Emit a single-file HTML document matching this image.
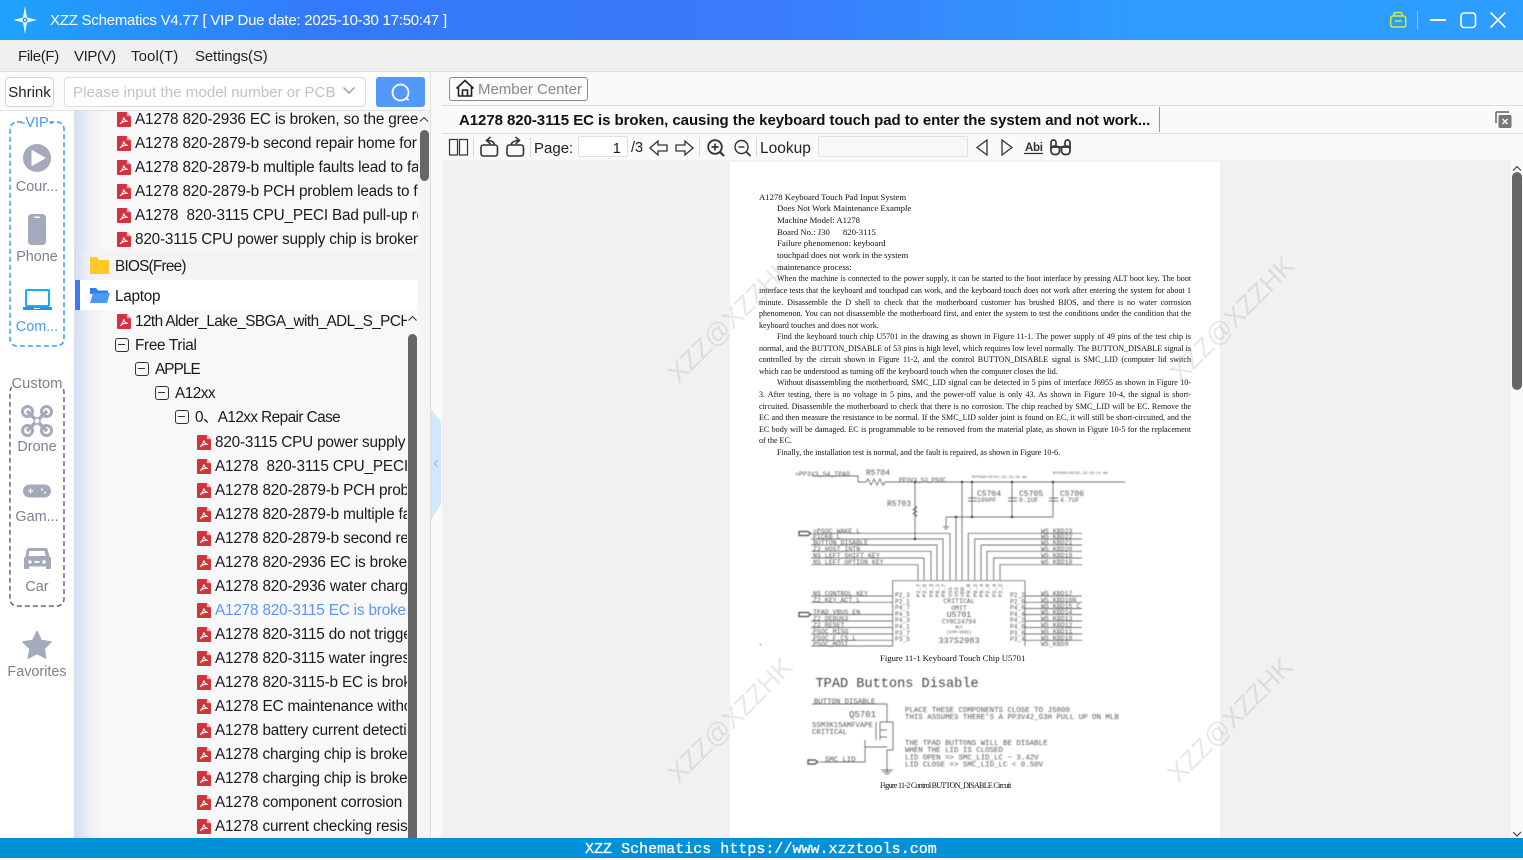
<!DOCTYPE html>
<html><head><meta charset="utf-8"><title>XZZ Schematics</title>
<style>
*{box-sizing:border-box}
html,body{margin:0;padding:0;width:1523px;height:858px;overflow:hidden;background:#fafafa;font-family:"Liberation Sans","Noto Sans CJK SC",sans-serif;color:#111}
.a{position:absolute}
.tb{left:0;top:0;width:1523px;height:40px;background:linear-gradient(90deg,#1ea3fb 0,#3478fb 22%,#3a7bfb 50%,#2e9cff 75%,#2d9dff 100%);color:#fff;font-size:15px;letter-spacing:-.24px;line-height:41px}
.menu{left:0;top:40px;width:1523px;height:32px;background:#f0f0f0;border-bottom:1px solid #dcdcdc;font-size:15px;line-height:34px;color:#222}
.menu span{position:absolute;top:0}
.side{left:0;top:111px;width:74px;height:727px;background:#fff}
.sl{position:absolute;left:0;width:74px;text-align:center;font-size:14.4px;line-height:20px;color:#7b8190}
.list{background:linear-gradient(90deg,#d3def2 0,#eef1f6 18px,#f8f8f8 30px,#f8f8f8 100%)}
.clip{position:absolute;left:74px;overflow:hidden}
.r{position:absolute;height:24px;line-height:26px;white-space:nowrap;font-size:15.3px;letter-spacing:-.17px;color:#1a1a1a}
.r svg{position:absolute;left:-18px;top:5px;width:14px;height:15px}
.m{position:absolute;left:-20px;top:5px;width:14px;height:14px;border:1.3px solid #333;border-radius:3px}
.m:after{content:"";position:absolute;left:2px;top:4.7px;width:7.4px;height:1.3px;background:#333}
.pl{position:absolute;font-family:"Liberation Serif",serif;font-size:8.05px;line-height:11.5px;height:11.5px;color:#111;overflow:hidden;white-space:nowrap}
.h{font-size:8.7px}
.j{left:759px;width:432px;white-space:normal;text-align:justify;text-align-last:justify}
.ji{left:777px;width:414px;white-space:normal;text-align:justify;text-align-last:justify}
.wm{position:absolute;font-size:26.5px;color:rgba(140,140,140,.2);transform:rotate(-45deg);white-space:nowrap;line-height:40px;width:200px;text-align:center}
svg text{font-family:"Liberation Mono",monospace}
.tlabel{font-size:15.3px;letter-spacing:-.25px;color:#1a1a1a;line-height:26px;white-space:nowrap}
</style></head><body>
<svg width="0" height="0" style="position:absolute"><defs>
<symbol id="pdf" viewBox="0 0 15 16"><path d="M1 0H10.5L15 4.5V15a1 1 0 0 1-1 1H1a1 1 0 0 1-1-1V1a1 1 0 0 1 1-1z" fill="#d2333f"/><path d="M10.5 0L15 4.5H10.5z" fill="#f0a5aa"/><path d="M3.2 12.6C5 11.5 6.8 8.5 7.4 5.6 7.6 8 9 9.6 11.6 10 9 9.6 6 10.2 3.2 12.6z" fill="none" stroke="#fff" stroke-width="1.1"/></symbol>
</defs></svg>

<!-- Title bar -->
<div class="a tb"><span class="a" style="left:50px;top:0;white-space:nowrap">XZZ Schematics V4.77 [ VIP Due date: 2025-10-30 17:50:47 ]</span></div>
<svg class="a" style="left:0;top:0" width="1523" height="40">
<path d="M25 6L27 17.5 37 20 27 22.5 25 34 23 22.5 13 20 23 17.5z" fill="#fff" opacity=".92"/>
<circle cx="25" cy="20" r="2.4" fill="#2a8df8"/><circle cx="25" cy="20" r="1" fill="#fff"/>
<g fill="none" stroke="#d7ea3a" stroke-width="1.5"><rect x="1390.7" y="16" width="15" height="11" rx="2"/><path d="M1394 16v-2.4a1 1 0 0 1 1-1h6a1 1 0 0 1 1 1V16"/><path d="M1395 21h6.5"/></g>
<path d="M1417.5 11V29" stroke="#8cc4fa" stroke-width="1"/>
<path d="M1430 20H1446" stroke="#fff" stroke-width="2"/>
<rect x="1461" y="13" width="14.5" height="14.5" rx="3" fill="none" stroke="#fff" stroke-width="1.6"/>
<path d="M1490.5 12.5L1505.5 27.5M1505.5 12.5L1490.5 27.5" stroke="#fff" stroke-width="1.6"/>
</svg>

<!-- Menu -->
<div class="a menu"><span style="left:18px;letter-spacing:-.35px">File(F)</span><span style="left:74px;letter-spacing:-.4px">VIP(V)</span><span style="left:131px;letter-spacing:.1px">Tool(T)</span><span style="left:195px;letter-spacing:-.15px">Settings(S)</span></div>

<!-- Search row -->
<div class="a" style="left:0;top:72px;width:431px;height:39px;background:#fbfbfb;border-bottom:1px solid #e2e2e2"></div>
<div class="a" style="left:5px;top:77px;width:49px;height:30px;background:#fff;border:1px solid #d4d4d4;border-radius:4px;font-size:15px;line-height:30px;text-align:center;color:#222">Shrink</div>
<div class="a" style="left:64px;top:77px;width:302px;height:30px;background:#fff;border:1px solid #dcdcdc;border-radius:4px;font-size:15.150px;line-height:30px;color:#c2c2c2;padding-left:8px;white-space:nowrap">Please input the model number or PCB</div>
<svg class="a" style="left:340px;top:84px" width="18" height="14"><path d="M3.5 3.5L9 9 14.500 3.5" fill="none" stroke="#999" stroke-width="1.4"/></svg>
<div class="a" style="left:376px;top:77px;width:49px;height:30px;background:#5299fb;border-radius:3px"></div>
<svg class="a" style="left:376px;top:77px" width="49" height="30"><circle cx="24.500" cy="15.500" r="8" fill="none" stroke="#fff" stroke-width="1.8"/><path d="M30 21l2.500 2" stroke="#fff" stroke-width="1.8"/></svg>

<!-- Side rail -->
<div class="a side"></div>
<svg class="a" style="left:0;top:111px" width="74" height="590">
<rect x="10" y="11" width="54" height="224" rx="7" fill="none" stroke="#3a9cf6" stroke-width="1.5" stroke-dasharray="5 3"/>
<rect x="10" y="274" width="54" height="221" rx="7" fill="none" stroke="#646c7c" stroke-width="1.5" stroke-dasharray="5 3"/>
<rect x="24" y="3" width="26" height="16" fill="#fff"/>
<rect x="12" y="264" width="50" height="16" fill="#fff"/>
<!-- play -->
<circle cx="37" cy="47" r="14" fill="#a3aabb"/><path d="M32 39.500L45 47 32 54.500z" fill="#fff" stroke="#fff" stroke-linejoin="round"/>
<!-- phone -->
<rect x="28" y="103" width="18" height="31" rx="3.500" fill="#a3aabb"/><rect x="34" y="105.500" width="6" height="1.500" rx=".7" fill="#fff"/>
<!-- computer -->
<rect x="26" y="179" width="23" height="16" rx="1" fill="#fff" stroke="#12b0f6" stroke-width="2"/><path d="M23 197.500H52" stroke="#2b8ff5" stroke-width="3"/><path d="M34 197.500h6" stroke="#fff" stroke-width="1"/>
<!-- drone -->
<g fill="none" stroke="#a3aabb"><path d="M27 300L47 320M47 300L27 320" stroke-width="3.500"/><circle cx="27.500" cy="300.500" r="5" stroke-width="3"/><circle cx="46.500" cy="300.500" r="5" stroke-width="3"/><circle cx="27.500" cy="319.500" r="5" stroke-width="3"/><circle cx="46.500" cy="319.500" r="5" stroke-width="3"/></g><circle cx="37" cy="310" r="3" fill="#fff" stroke="#a3aabb" stroke-width="1.500"/>
<!-- gamepad -->
<rect x="23" y="373.500" width="28" height="13" rx="6.500" fill="#a3aabb"/><path d="M28 380h5M30.500 377.500v5" stroke="#fff" stroke-width="1.200"/><circle cx="42" cy="378.500" r="1" fill="#fff"/><circle cx="45" cy="381.500" r="1" fill="#fff"/>
<!-- car -->
<path d="M29 437h16a3 3 0 0 1 3 2.500l1.500 6 1.500 1.500v11h-5v-2.500H29V458h-5V447l1.500-1.500 1-6A3 3 0 0 1 29 437z" fill="#a3aabb"/><path d="M29.500 440h15l1.200 5H28.300z" fill="#fff"/><circle cx="30" cy="451" r="1.700" fill="#fff"/><circle cx="44" cy="451" r="1.700" fill="#fff"/><rect x="34.500" y="450" width="5" height="1.800" fill="#fff"/>
<!-- star -->
<path d="M37 520.500l4.300 9 9.700 1.400-7 6.800 1.700 9.300-8.700-4.500-8.700 4.500 1.700-9.300-7-6.800 9.700-1.400z" fill="#a3aabb" stroke="#a3aabb" stroke-width="1.500" stroke-linejoin="round"/>
</svg>
<div class="sl" style="top:113px;color:#3a9cf6">-VIP-</div>
<div class="sl" style="top:177px">Cour...</div>
<div class="sl" style="top:247px">Phone</div>
<div class="sl" style="top:317px;color:#4a9bf6">Com...</div>
<div class="sl" style="top:374px;font-size:14.800px">Custom</div>
<div class="sl" style="top:437px">Drone</div>
<div class="sl" style="top:507px">Gam...</div>
<div class="sl" style="top:577px">Car</div>
<div class="sl" style="top:662px">Favorites</div>

<!-- Tree part A -->
<div class="clip list" style="top:111px;width:344px;height:139px">
<div class="r" style="left:61px;top:-4px"><svg><use href="#pdf"/></svg>A1278 820-2936 EC is broken, so the green light does not work</div>
<div class="r" style="left:61px;top:20px"><svg><use href="#pdf"/></svg>A1278 820-2879-b second repair home for repair</div>
<div class="r" style="left:61px;top:44px"><svg><use href="#pdf"/></svg>A1278 820-2879-b multiple faults lead to failure</div>
<div class="r" style="left:61px;top:68px"><svg><use href="#pdf"/></svg>A1278 820-2879-b PCH problem leads to failure</div>
<div class="r" style="left:61px;top:92px"><svg><use href="#pdf"/></svg>A1278&nbsp; 820-3115 CPU_PECI Bad pull-up resistor</div>
<div class="r" style="left:61px;top:116px"><svg><use href="#pdf"/></svg>820-3115 CPU power supply chip is broken</div>
</div>
<div class="a list" style="left:74px;top:250px;width:344px;height:30px;background:linear-gradient(90deg,#d3def2 0,#eef1f6 14px,#f4f4f4 24px)"></div>
<svg class="a" style="left:88px;top:255px" width="24" height="20"><path d="M2 3a1 1 0 0 1 1-1h6l2 3h10v14H2z" fill="#ffc928"/></svg>
<div class="a tlabel" style="left:115px;top:254px;letter-spacing:-.75px">BIOS(Free)</div>
<div class="a" style="left:74px;top:280px;width:344px;height:30px;background:#fff"></div>
<div class="a" style="left:75px;top:280px;width:5px;height:30px;background:#3f78f5"></div>
<svg class="a" style="left:88px;top:286px" width="24" height="20"><path d="M2 2h6l2 2.500h10V8H2z" fill="#2f7ff0"/><path d="M5 7h17l-3 10H2z" fill="#4b98f7"/></svg>
<div class="a tlabel" style="left:115px;top:284px">Laptop</div>

<!-- Tree part B -->
<div class="clip list" style="top:310px;width:333px;height:528px">
<div class="r" style="left:61px;top:-1px;letter-spacing:-.55px"><svg><use href="#pdf"/></svg>12th Alder_Lake_SBGA_with_ADL_S_PCH_</div>
<div class="r" style="left:61px;top:23px;letter-spacing:-.3px"><i class="m"></i>Free Trial</div>
<div class="r" style="left:81px;top:47px;letter-spacing:-.9px"><i class="m"></i>APPLE</div>
<div class="r" style="left:101px;top:71px;letter-spacing:-.5px"><i class="m"></i>A12xx</div>
<div class="r" style="left:121px;top:95px;letter-spacing:-.55px"><i class="m"></i>0、A12xx Repair Case</div>
<div class="r" style="left:141px;top:120px"><svg><use href="#pdf"/></svg>820-3115 CPU power supply chip</div>
<div class="r" style="left:141px;top:144px"><svg><use href="#pdf"/></svg>A1278&nbsp; 820-3115 CPU_PECI Bad pull-up</div>
<div class="r" style="left:141px;top:168px"><svg><use href="#pdf"/></svg>A1278 820-2879-b PCH problem leads</div>
<div class="r" style="left:141px;top:192px"><svg><use href="#pdf"/></svg>A1278 820-2879-b multiple faults lead</div>
<div class="r" style="left:141px;top:216px"><svg><use href="#pdf"/></svg>A1278 820-2879-b second repair</div>
<div class="r" style="left:141px;top:240px"><svg><use href="#pdf"/></svg>A1278 820-2936 EC is broken, so</div>
<div class="r" style="left:141px;top:264px"><svg><use href="#pdf"/></svg>A1278 820-2936 water charging</div>
<div class="r" style="left:141px;top:288px;color:#5b96f7"><svg><use href="#pdf"/></svg>A1278 820-3115 EC is broken, causing</div>
<div class="r" style="left:141px;top:312px"><svg><use href="#pdf"/></svg>A1278 820-3115 do not trigger</div>
<div class="r" style="left:141px;top:336px"><svg><use href="#pdf"/></svg>A1278 820-3115 water ingress</div>
<div class="r" style="left:141px;top:360px"><svg><use href="#pdf"/></svg>A1278 820-3115-b EC is broken</div>
<div class="r" style="left:141px;top:384px"><svg><use href="#pdf"/></svg>A1278 EC maintenance without</div>
<div class="r" style="left:141px;top:408px"><svg><use href="#pdf"/></svg>A1278 battery current detection</div>
<div class="r" style="left:141px;top:432px"><svg><use href="#pdf"/></svg>A1278 charging chip is broken</div>
<div class="r" style="left:141px;top:456px"><svg><use href="#pdf"/></svg>A1278 charging chip is broken</div>
<div class="r" style="left:141px;top:480px"><svg><use href="#pdf"/></svg>A1278 component corrosion</div>
<div class="r" style="left:141px;top:504px"><svg><use href="#pdf"/></svg>A1278 current checking resistor</div>
</div>
<div class="a" style="left:407px;top:310px;width:11px;height:528px;background:#f8f8f8"></div>
<div class="a" style="left:408px;top:334px;width:9px;height:504px;background:#666;border-radius:5px 5px 0 0"></div>
<svg class="a" style="left:406px;top:313px" width="13" height="11"><path d="M2.500 7.500L6.500 3.500 10.500 7.500" fill="none" stroke="#333" stroke-width="1"/></svg>

<!-- Scrollbar A -->
<div class="a" style="left:418px;top:111px;width:12px;height:727px;background:#f5f5f5"></div>
<div class="a" style="left:420px;top:130px;width:9px;height:51px;background:#666;border-radius:5px"></div>
<svg class="a" style="left:418px;top:114px" width="12" height="11"><path d="M2 7.500L6 3.500 10 7.500" fill="none" stroke="#333" stroke-width="1"/></svg>

<!-- Splitter -->
<div class="a" style="left:430px;top:72px;width:1px;height:766px;background:#dedede"></div>
<svg class="a" style="left:431px;top:405px" width="11" height="120"><path d="M0 4L10 17V99L0 115z" fill="#d2e7fb"/><path d="M6.500 55L3.500 58.500 6.500 62" fill="none" stroke="#86b8ee" stroke-width="1"/></svg>

<!-- Right header -->
<div class="a" style="left:442px;top:105px;width:1081px;height:1px;background:#dcdcdc"></div>
<div class="a" style="left:442px;top:133px;width:1081px;height:1px;background:#dcdcdc"></div>
<div class="a" style="left:449px;top:77px;width:139px;height:24px;border:1px solid #8a8a8a;border-radius:3px;background:#fbfbfb;font-size:15px;letter-spacing:-.02px;line-height:24px;color:#888;padding-left:28px;white-space:nowrap">Member Center</div>
<svg class="a" style="left:452.500px;top:78px" width="24" height="20"><path d="M3.500 10.500L12 2.500l8.500 8M5.500 8.500V18H18.500V8.500M9.500 18V12H14.500V18" fill="none" stroke="#222" stroke-width="1.600"/></svg>
<div class="a" style="left:459px;top:106px;width:695px;height:27px;font-size:15px;letter-spacing:-.06px;font-weight:bold;line-height:29px;color:#111;white-space:nowrap;overflow:hidden">A1278 820-3115 EC is broken, causing the keyboard touch pad to enter the system and not work...</div>
<div class="a" style="left:1159px;top:107px;width:1px;height:25px;background:#999"></div>
<svg class="a" style="left:1493px;top:109px" width="20" height="20"><path d="M3 14V4a1 1 0 0 1 1-1h12" fill="none" stroke="#777" stroke-width="1.700"/><rect x="5.500" y="6" width="13" height="13" rx="1.500" fill="#777"/><path d="M9.500 10l5 5M14.500 10l-5 5" stroke="#fff" stroke-width="1.400"/></svg>

<!-- Toolbar -->
<svg class="a" style="left:442px;top:134px" width="640" height="26">
<g fill="none" stroke="#333" stroke-width="1.200">
<rect x="7.500" y="5.500" width="8" height="15.500"/><rect x="17.500" y="5.500" width="8" height="15.500"/>
<rect x="39" y="11" width="16.500" height="11" rx="2.500" stroke-width="1.600"/><path d="M52.500 10.500C52 8 50 6.500 45 6.500M48.500 3L44.500 6.500 48.500 10" stroke-width="1.500"/>
<rect x="65" y="11" width="16.500" height="11" rx="2.500" stroke-width="1.600"/><path d="M69 10.500C70 8 72 6.500 77 6.500M73.500 3L77.500 6.500 73.500 10" stroke-width="1.500"/>
<path d="M208 14l8-7v4h9v6h-9v4z M251 14l-8-7v4h-9v6h9v4z" stroke-width="1.300"/>
<circle cx="273" cy="13" r="6.800" stroke-width="1.800"/><path d="M278 18l4 4" stroke-width="2.200"/><path d="M269.500 13h7M273 9.500v7" stroke-width="1.700"/>
<circle cx="299.500" cy="13" r="6.500" stroke-width="1.400"/><path d="M304.500 18l4 4" stroke-width="1.800"/><path d="M296.500 13h6" stroke-width="1.400"/>
<path d="M545 6l-10 7.500 10 7.500zM560 6l10 7.500-10 7.500z" stroke-width="1.300"/>
<path d="M582 19.500h19" stroke-width="1.200"/>
<g stroke-width="1.700"><path d="M609 15V8.500a2.500 2.500 0 0 1 5 0V11M623 11V8.500a2.500 2.500 0 0 1 5 0V15M609 13H628"/><rect x="609" y="12" width="8.500" height="8.500" rx="3.500"/><rect x="619.500" y="12" width="8.500" height="8.500" rx="3.500"/></g>
</g>
<g stroke="#d8d8d8" stroke-width="1"><path d="M31.500 3V23M88.500 3V23M257.500 3V23M314.500 3V23"/></g>
<text x="583" y="17" style="font-family:'Liberation Sans',sans-serif;font-weight:bold" font-size="11.500" fill="#333" textLength="18">Abi</text>
</svg>
<div class="a" style="left:534px;top:134px;font-size:15px;line-height:29px;color:#222">Page:</div>
<div class="a" style="left:578px;top:136px;width:50px;height:21px;background:#fff;border:1px solid #e0e0e0;border-radius:2px;font-size:15px;line-height:23px;text-align:right;padding-right:6px;color:#222">1</div>
<div class="a" style="left:631px;top:134px;font-size:14.500px;line-height:29px;color:#222">/3</div>
<div class="a" style="left:760px;top:134px;font-size:15.500px;line-height:29px;color:#222">Lookup</div>
<div class="a" style="left:818px;top:136px;width:150px;height:21px;background:#f8f8f8;border:1px solid #e0e0e0;border-radius:2px"></div>

<!-- Viewer -->
<div class="a" style="left:442px;top:160px;width:1069px;height:678px;background:#f1f1f1"></div>
<div class="a" style="left:730px;top:162px;width:490px;height:676px;background:#fff"></div>
<div class="a" style="left:1511px;top:160px;width:12px;height:678px;background:#fafafa"></div>
<div class="a" style="left:1512px;top:172px;width:10px;height:218px;background:#666;border-radius:5px"></div>
<svg class="a" style="left:1511px;top:164px" width="12" height="9"><path d="M2 6.500L6 2.500 10 6.500" fill="none" stroke="#333" stroke-width="1"/></svg>
<svg class="a" style="left:1511px;top:831px" width="12" height="7"><path d="M2 1L6 5 10 1" fill="none" stroke="#333" stroke-width="1"/></svg>

<!-- Page text -->
<div style="filter:blur(.25px)">
<div class="pl h" style="left:759px;top:191.500px">A1278 Keyboard Touch Pad Input System</div>
<div class="pl h" style="left:777px;top:203px">Does Not Work Maintenance Example</div>
<div class="pl h" style="left:777px;top:214.500px">Machine Model: A1278</div>
<div class="pl h" style="left:777px;top:226.500px">Board No.: J30 &nbsp; &nbsp; &nbsp;820-3115</div>
<div class="pl h" style="left:777px;top:238px">Failure phenomenon: keyboard</div>
<div class="pl h" style="left:777px;top:250px">touchpad does not work in the system</div>
<div class="pl h" style="left:777px;top:261.500px">maintenance process:</div>
<div class="pl ji" style="top:273px">When the machine is connected to the power supply, it can be started to the boot interface by pressing ALT boot key. The boot</div>
<div class="pl j" style="top:284.500px">interface tests that the keyboard and touchpad can work, and the keyboard touch does not work after entering the system for about 1</div>
<div class="pl j" style="top:296.500px">minute. Disassemble the D shell to check that the motherboard customer has brushed BIOS, and there is no water corrosion</div>
<div class="pl j" style="top:308px">phenomenon. You can not disassemble the motherboard first, and enter the system to test the conditions under the condition that the</div>
<div class="pl" style="left:759px;top:319.500px">keyboard touches and does not work.</div>
<div class="pl ji" style="top:331px">Find the keyboard touch chip U5701 in the drawing as shown in Figure 11-1. The power supply of 49 pins of the test chip is</div>
<div class="pl j" style="top:342.500px">normal, and the BUTTON_DISABLE of 53 pins is high level, which requires low level normally. The BUTTON_DISABLE signal is</div>
<div class="pl j" style="top:354px">controlled by the circuit shown in Figure 11-2, and the control BUTTON_DISABLE signal is SMC_LID (computer lid switch signal),</div>
<div class="pl" style="left:759px;top:365.500px">which can be understood as turning off the keyboard touch when the computer closes the lid.</div>
<div class="pl ji" style="top:377px">Without disassembling the motherboard, SMC_LID signal can be detected in 5 pins of interface J6955 as shown in Figure 10-</div>
<div class="pl j" style="top:388.500px">3. After testing, there is no voltage in 5 pins, and the power-off value is only 43. As shown in Figure 10-4, the signal is short-</div>
<div class="pl j" style="top:400.500px">circuited. Disassemble the motherboard to check that there is no corrosion. The chip reached by SMC_LID will be EC. Remove the</div>
<div class="pl j" style="top:412px">EC and then measure the resistance to be normal. If the SMC_LID solder joint is found on EC, it will still be short-circuited, and the</div>
<div class="pl j" style="top:423.500px">EC body will be damaged. EC is programmable to be removed from the material plate, as shown in Figure 10-5 for the replacement</div>
<div class="pl" style="left:759px;top:435px">of the EC.</div>
<div class="pl" style="left:777px;top:446.500px">Finally, the installation test is normal, and the fault is repaired, as shown in Figure 10-6.</div>
<div class="pl h" style="left:880px;top:652.500px;width:160px">Figure 11-1 Keyboard Touch Chip U5701</div>
<div class="pl" style="left:880px;top:779.500px;width:140px;letter-spacing:-.72px">Figure 11-2 Control BUTTON_DISABLE Circuit</div>
</div>

<!-- Schematics -->
<svg class="a" style="left:0;top:0;filter:blur(.4px)" width="1523" height="858">
<g fill="none" stroke="#444" stroke-width=".7">
<path d="M812 476H858V482H866l2-3 3 6 3-6 3 6 3-6 3 6 2-3H1125"/>
<path d="M915 482V539M956 517V580M962 482V580"/>
<path d="M972 482V517M1012 482V517M1053 482V517M946 517H1053M946 517V527M943 527h6M944.500 529h3"/>
<path d="M968 498h9M968 501h9M1008 498h9M1008 501h9M1049 498h9M1049 501h9"/>
<path d="M915 506l2 1.500-4 2 4 2-4 2 4 2-2 1.500"/>
<path d="M811 533.300H950V580M811 539H943V580M811 545H937V580M811 551.300H931V580M811 558H924V580M811 564.700H918V580"/>
<path d="M968.300 580V533.300H1082M974.700 580V539H1082M981 580V545H1082M987 580V551.300H1082M993.700 580V558H1082M1000 580V564.700H1082"/>
<path d="M892.700 646V580.700H1025V646"/>
<path d="M811 596H893M811 602.300H893M811 614.500H893M811 621H893M811 627.500H893M811 634H893M811 640.300H893M811 646H893"/>
<path d="M1025 596H1082M1025 602.300H1082M1025 608.500H1082M1025 614.500H1082M1025 621H1082M1025 627.500H1082M1025 634H1082M1025 640.300H1082"/>
<path d="M799 531.500h9l2.500 2-2.500 2h-9zM799 612.500h9l2.500 2-2.500 2h-9z" stroke-width="1.200"/>
<!-- fig 2 -->
<path d="M812 704H887V722H893V750H887V772M876 722V740M880 722V740M880 722H887M880 730H887M880 737H887M887 747H865M865 740V762H820"/>
<path d="M808 760h7l3 2-3 2h-7z" stroke-width="1.200"/>
<path d="M881 770h12M883 772h8M885 774h4"/>
</g>
<g fill="#333"><circle cx="915" cy="539" r="1.200"/><circle cx="915" cy="482" r="1.200"/><circle cx="962" cy="482" r="1.200"/><circle cx="972" cy="482" r="1.200"/><circle cx="1012" cy="482" r="1.200"/><circle cx="1053" cy="482" r="1.200"/><circle cx="956" cy="517" r="1.200"/><circle cx="972" cy="517" r="1.200"/><circle cx="1012" cy="517" r="1.200"/><circle cx="760.500" cy="644.500" r=".6"/></g>
<g fill="#555" font-size="6.550">
<text x="795" y="476">=PP3V3_S4_TPAD</text>
<text x="866" y="475" font-size="8">R5704</text>
<text x="899" y="482" font-size="6">PP3V3_S3_PSOC</text>
<text x="887" y="506" font-size="8">R5703</text>
<text x="977" y="496" font-size="8">C5704</text>
<text x="1019" y="496" font-size="8">C5705</text>
<text x="1060" y="496" font-size="8">C5706</text>
<text x="977" y="502" font-size="6.500">100PF</text>
<text x="1019" y="502" font-size="6.500">0.1UF</text>
<text x="1060" y="502" font-size="6.500">4.7UF</text>
<text x="972" y="478" font-size="3.800">BYPASS=U5701.22:15:15 mm</text>
<text x="1053" y="474" font-size="3.800">BYPASS=U5701.22:19:11 mm</text>
<text x="813" y="533">=PSOC_WAKE_L</text><text x="813" y="538.500">PICKB_L</text><text x="813" y="544.500">BUTTON_DISABLE</text><text x="813" y="551">Z2_HOST_INTN</text><text x="813" y="557.500">NS_LEFT_SHIFT_KEY</text><text x="813" y="564">NS_LEFT_OPTION_KEY</text>
<text x="1041" y="533">WS_KBD23</text><text x="1041" y="538.500">WS_KBD22</text><text x="1041" y="544.500">WS_KBD21</text><text x="1041" y="551">WS_KBD20</text><text x="1041" y="557.500">WS_KBD19</text><text x="1041" y="564">WS_KBD18</text>
<text x="813" y="595.500">NS_CONTROL_KEY</text><text x="813" y="602">Z2_KEY_ACT_L</text><text x="813" y="614">TPAD_VBUS_EN</text><text x="813" y="620.500">Z2_DEBUG3</text><text x="813" y="627">Z2_RESET</text><text x="813" y="633.500">PSOC_MISO</text><text x="813" y="640">PSOC_F_CS_L</text><text x="813" y="646">PSOC_MOSI</text>
<text x="1041" y="595.500">WS_KBD17</text><text x="1041" y="602">WS_KBD16N</text><text x="1041" y="608">WS_KBD15_C</text><text x="1041" y="614">WS_KBD14</text><text x="1041" y="620.500">WS_KBD13</text><text x="1041" y="627">WS_KBD12</text><text x="1041" y="633.500">WS_KBD11</text><text x="1041" y="640">WS_KBD10</text><text x="1041" y="646">WS_KBD9</text>
<g font-size="6.200"><text x="895" y="597">P2_3</text><text x="895" y="603.500">P2_1</text><text x="895" y="609.500">P4_7</text><text x="895" y="616">P4_5</text><text x="895" y="622">P4_3</text><text x="895" y="628.500">P4_1</text><text x="895" y="635">P3_7</text><text x="895" y="641">P3_5</text>
<text x="1010" y="597">P2_2</text><text x="1010" y="603.500">P2_0</text><text x="1010" y="609.500">P4_6</text><text x="1010" y="616">P4_4</text><text x="1010" y="622">P4_2</text><text x="1010" y="628.500">P4_0</text><text x="1010" y="635">P3_6</text><text x="1010" y="641">P3_4</text></g>
<g font-size="5.500">
<text transform="translate(920,597) rotate(-90)">P2_7</text><text transform="translate(926,597) rotate(-90)">P2_5</text><text transform="translate(933,597) rotate(-90)">P0_3</text><text transform="translate(939,597) rotate(-90)">P0_1</text><text transform="translate(945,597) rotate(-90)">P0_7</text><text transform="translate(952,597) rotate(-90)">VSS</text><text transform="translate(958,597) rotate(-90)">VSS</text><text transform="translate(964,597) rotate(-90)">VDD</text><text transform="translate(970,597) rotate(-90)">P0_0</text><text transform="translate(977,597) rotate(-90)">P0_2</text><text transform="translate(983,597) rotate(-90)">P0_4</text><text transform="translate(989,597) rotate(-90)">P2_6</text><text transform="translate(996,597) rotate(-90)">P2_4</text><text transform="translate(1002,597) rotate(-90)">P2_2</text>
</g>
<g text-anchor="middle"><text x="959" y="603" font-size="6.500">CRITICAL</text><text x="959" y="610" font-size="6.500">OMIT</text><text x="959" y="617" font-size="8.200">U5701</text><text x="959" y="623.500" font-size="6.300">CY8C24794</text><text x="959" y="628.500" font-size="4.200">MLF</text><text x="959" y="633.500" font-size="4.200">(SYM-VER2)</text><text x="959" y="643" font-size="8.600">337S2983</text></g>
<text x="815.500" y="687" font-size="13.600" fill="#444">TPAD Buttons Disable</text>
<text x="814" y="703.500" font-size="7.300">BUTTON_DISABLE</text>
<text x="849" y="717" font-size="9">Q5701</text>
<text x="812" y="727" font-size="7.250">SSM3K15AMFVAPE</text>
<text x="812" y="734" font-size="7.300">CRITICAL</text>
<text x="825" y="761.500" font-size="7.300">SMC_LID</text>
<g font-size="7.430"><text x="905" y="712">PLACE THESE COMPONENTS CLOSE TO J5800</text><text x="905" y="719">THIS ASSUMES THERE'S A PP3V42_G3H PULL UP ON MLB</text><text x="905" y="745">THE TPAD BUTTONS WILL BE DISABLE</text><text x="905" y="752">WHEN THE LID IS CLOSED</text><text x="905" y="759.500">LID OPEN =&gt; SMC_LID_LC ~ 3.42V</text><text x="905" y="766.500">LID CLOSE =&gt; SMC_LID_LC &lt; 0.50V</text></g>
</g>
</svg>

<!-- Watermarks -->
<div class="wm" style="left:630px;top:300px">XZZ@XZZHK</div>
<div class="wm" style="left:1132px;top:299px">XZZ@XZZHK</div>
<div class="wm" style="left:630px;top:700px">XZZ@XZZHK</div>
<div class="wm" style="left:1130px;top:700px">XZZ@XZZHK</div>

<!-- Status bar -->
<div class="a" style="left:0;top:838px;width:1523px;height:20px;background:#0091d9"></div>
<div class="a" style="left:585px;top:838px;height:20px;font-family:'Liberation Mono',monospace;font-size:15.040px;line-height:22px;color:#fff;white-space:nowrap;-webkit-text-stroke:.3px #fff">XZZ Schematics https://www.xzztools.com</div>
</body></html>
